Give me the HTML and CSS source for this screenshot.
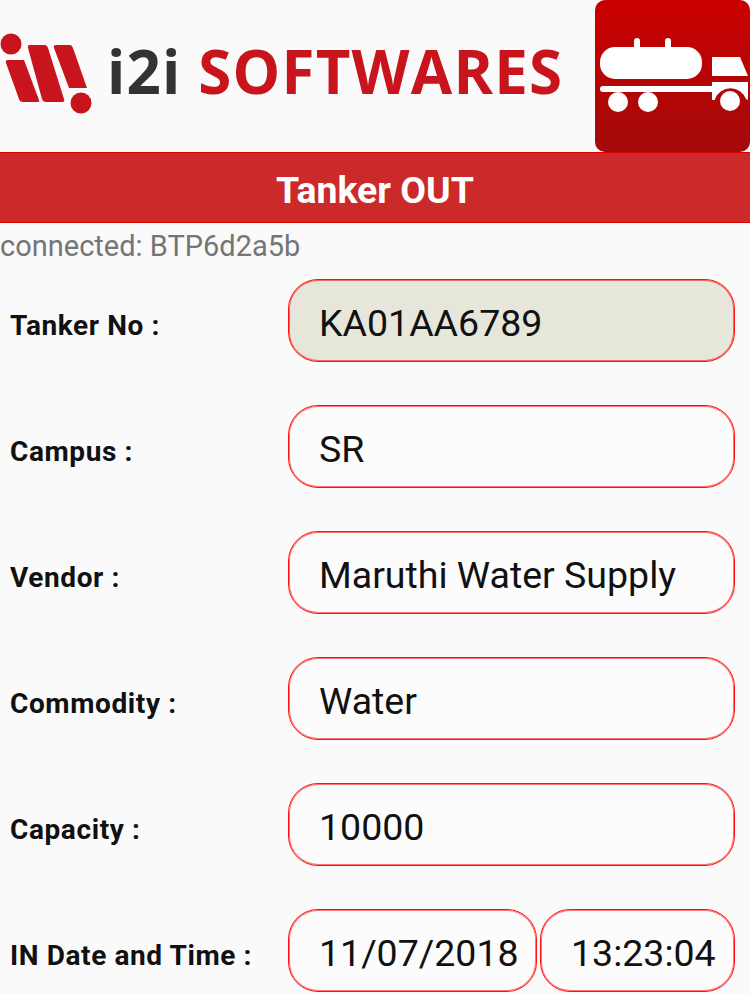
FILE: index.html
```html
<!DOCTYPE html>
<html>
<head>
    <title>Tanker OUT</title>
    <link rel="stylesheet" href="styles.css">
</head>
<body>
    <div id="header">
        <div id="brand">
            <svg class="brand-mark" width="92" height="114" viewBox="0 0 92 114">
                <circle cx="11" cy="44" r="10.5" fill="#c8141c"/>
                <path d="M8 60 H24 L39 100 Q40 102 37 102 H23 Q20 102 19 99 L6 63 Q5 60 8 60 Z" fill="#c8141c"/>
                <path d="M30 45 H45 Q47 45 48 48 L64 99 Q65 102 62 102 H46 Q43 102 42 99 L28 48 Q27 45 30 45 Z" fill="#c8141c"/>
                <path d="M56 45 H70 Q72 45 73 48 L87 88 H69 L54 48 Q53 45 56 45 Z" fill="#c8141c"/>
                <circle cx="81" cy="103" r="10.5" fill="#c8141c"/>
            </svg>
            <div id="brand-name"><span class="brand-dark">i2i</span> SOFTWARES</div>
        </div>
        <div id="app-icon">
            <svg width="155" height="152" viewBox="15 0 155 152">
                <rect x="20" y="47" width="102" height="32" rx="15" fill="#fff"/>
                <rect x="54" y="38" width="6" height="12" rx="3" fill="#fff"/>
                <rect x="85" y="38" width="6" height="12" rx="3" fill="#fff"/>
                <path d="M132 57 H160 L168 76 H132 Z" fill="#fff"/>
                <path d="M132 82 H168 V100 L166 99 A16.5 16.5 0 0 0 135 99 V100 H132 Z" fill="#fff"/>
                <rect x="20" y="86" width="114" height="6" rx="3" fill="#fff"/>
                <circle cx="38" cy="102" r="10" fill="#fff"/>
                <circle cx="68" cy="102" r="10" fill="#fff"/>
                <circle cx="150" cy="101" r="10" fill="#fff"/>
            </svg>
        </div>
    </div>
    <div id="title-bar">Tanker OUT</div>
    <div id="status">connected: BTP6d2a5b</div>
    <div id="form">
        <div class="row">
            <div class="label">Tanker No :</div>
            <div class="field filled">KA01AA6789</div>
        </div>
        <div class="row">
            <div class="label">Campus :</div>
            <div class="field">SR</div>
        </div>
        <div class="row">
            <div class="label">Vendor :</div>
            <div class="field">Maruthi Water Supply</div>
        </div>
        <div class="row">
            <div class="label">Commodity :</div>
            <div class="field">Water</div>
        </div>
        <div class="row">
            <div class="label">Capacity :</div>
            <div class="field">10000</div>
        </div>
        <div class="row">
            <div class="label">IN Date and Time :</div>
            <div class="field-pair">
                <div class="field date">11/07/2018</div>
                <div class="field time">13:23:04</div>
            </div>
        </div>
    </div>
</body>
</html>
```

FILE: styles.css
```css
html {
    overflow: hidden;
}
body {
    font-family: Roboto, "Liberation Sans", sans-serif;
    margin: 0;
    padding: 0;
    height: 994px;
    overflow: hidden;
    background-color: #fafafa;
    color: #111;
}
#header {
    height: 152px;
    display: flex;
    justify-content: space-between;
}
#brand {
    display: flex;
    align-items: flex-start;
}
.brand-mark {
    flex: none;
}
#brand-name {
    margin: 30px 0 0 15px;
    font-family: "Open Sans", sans-serif;
    font-size: 60px;
    line-height: 82px;
    font-weight: 700;
    letter-spacing: 1.2px;
    color: #c8141c;
    white-space: nowrap;
}
.brand-dark {
    color: #333;
}
#app-icon {
    width: 155px;
    height: 152px;
    border-radius: 10px;
    background: linear-gradient(#cb0000, #a30a0a);
}
#app-icon svg {
    display: block;
}
#title-bar {
    height: 69px;
    line-height: 74px;
    border-top: 1px solid #d00;
    border-bottom: 1px solid #d00;
    background-color: #cc2a2a;
    color: white;
    font-size: 37.4px;
    font-weight: 700;
    text-align: center;
}
#status {
    height: 56px;
    line-height: 46px;
    font-size: 29px;
    color: #757575;
    white-space: nowrap;
}
#form {
    display: flex;
    flex-direction: column;
    gap: 43px;
    padding-right: 15px;
}
.row {
    display: flex;
    align-items: center;
    height: 83px;
}
.label {
    width: 278px;
    padding-left: 10px;
    padding-top: 10px;
    font-size: 28px;
    font-weight: 700;
    letter-spacing: 0.6px;
    white-space: nowrap;
}
.field {
    flex: 1;
    box-sizing: border-box;
    height: 83px;
    line-height: 87px;
    padding-left: 30px;
    border: 1px solid #f11;
    box-shadow: inset 0 0 0 1px rgba(255, 0, 0, 0.55);
    border-radius: 30px;
    background-color: #fcfcfc;
    font-size: 37.5px;
    white-space: nowrap;
}
.field.filled {
    background-color: #e6e6da;
}
.field-pair {
    flex: 1;
    display: flex;
    gap: 3px;
}
.field.date {
    flex: none;
    width: 249px;
}
.field.time {
    flex: 1;
}
```
